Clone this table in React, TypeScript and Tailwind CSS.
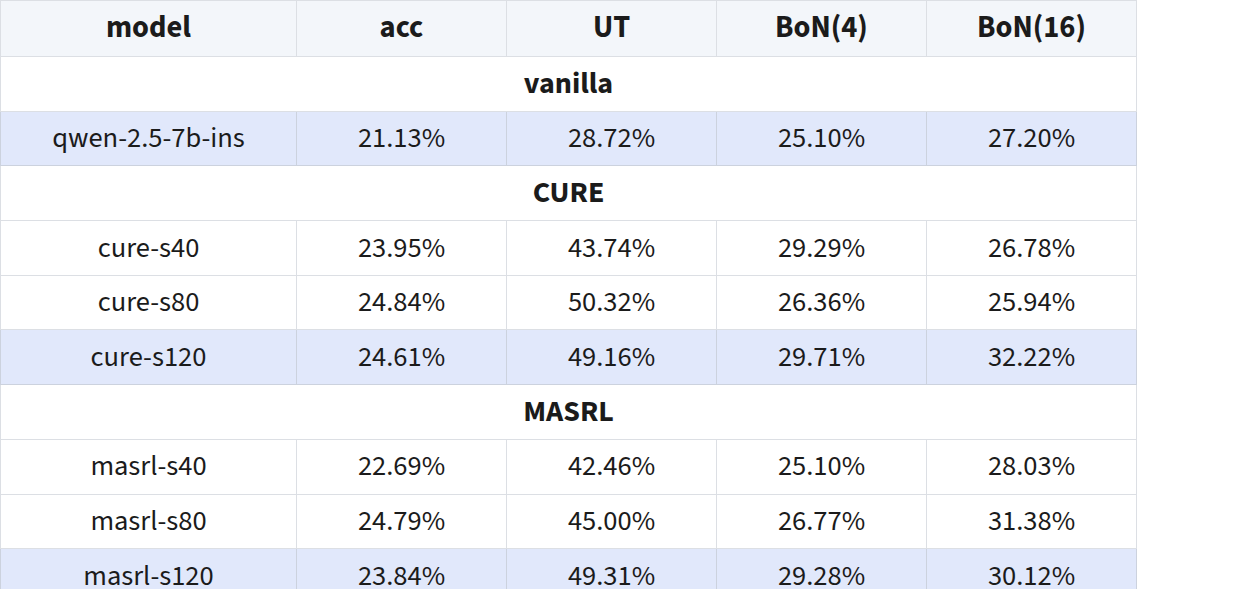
const cols = ['model', 'acc', 'UT', 'BoN(4)', 'BoN(16)'];

type Row = { kind: 'group'; label: string } | { kind: 'data'; cells: string[]; hl?: boolean };

const rows: Row[] = [
  { kind: 'group', label: 'vanilla' },
  { kind: 'data', cells: ['qwen-2.5-7b-ins', '21.13%', '28.72%', '25.10%', '27.20%'], hl: true },
  { kind: 'group', label: 'CURE' },
  { kind: 'data', cells: ['cure-s40', '23.95%', '43.74%', '29.29%', '26.78%'] },
  { kind: 'data', cells: ['cure-s80', '24.84%', '50.32%', '26.36%', '25.94%'] },
  { kind: 'data', cells: ['cure-s120', '24.61%', '49.16%', '29.71%', '32.22%'], hl: true },
  { kind: 'group', label: 'MASRL' },
  { kind: 'data', cells: ['masrl-s40', '22.69%', '42.46%', '25.10%', '28.03%'] },
  { kind: 'data', cells: ['masrl-s80', '24.79%', '45.00%', '26.77%', '31.38%'] },
  { kind: 'data', cells: ['masrl-s120', '23.84%', '49.31%', '29.28%', '30.12%'], hl: true },
];

const widths = ['w-[296px]', 'w-[210px]', 'w-[210px]', 'w-[210px]', 'w-[210px]'];

export default function App() {
  return (
    <div className="min-h-screen bg-white text-[#1b1b1b] font-['Source_Sans_Pro','Source_Sans_3',Lato,sans-serif]">
      <table className="border-collapse table-fixed w-[1137px] text-[28.5px] leading-none">
        <thead>
          <tr className="bg-[#f3f6fa] h-[56px]">
            {cols.map((c, i) => (
              <th key={c} className={`${widths[i]} border border-[#dcdfe4] font-bold text-[30.5px] text-center`}>
                {c}
              </th>
            ))}
          </tr>
        </thead>
        <tbody>
          {rows.map((r, i) =>
            r.kind === 'group' ? (
              <tr key={i} className="h-[54.7px]">
                <td colSpan={5} className="border border-[#dcdfe4] text-center font-bold text-[30px]">
                  {r.label}
                </td>
              </tr>
            ) : (
              <tr key={i} className={`h-[54.7px] ${r.hl ? 'bg-[#e1e8fb]' : 'bg-white'}`}>
                {r.cells.map((c, j) => (
                  <td
                    key={j}
                    className={`border text-center ${r.hl ? 'border-[#ccd2de]' : 'border-[#dcdfe4]'}`}
                  >
                    {c}
                  </td>
                ))}
              </tr>
            ),
          )}
        </tbody>
      </table>
    </div>
  );
}
